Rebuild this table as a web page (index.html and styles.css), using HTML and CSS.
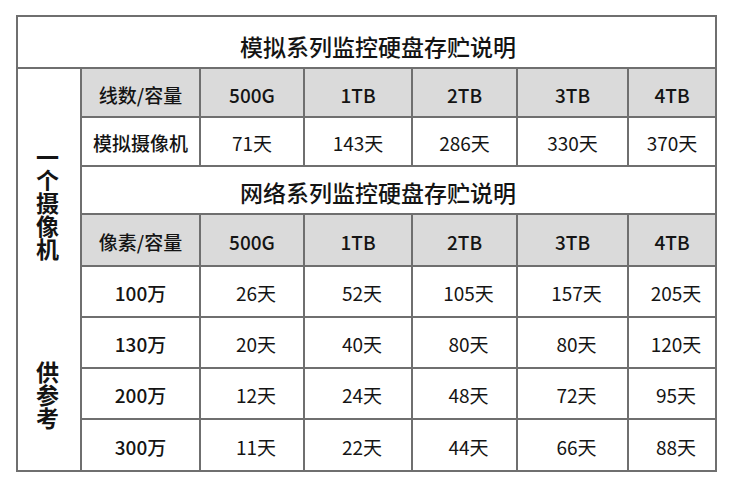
FILE: index.html
```html
<!DOCTYPE html>
<html lang="zh-CN">
<head>
<meta charset="utf-8">
<title>监控硬盘存贮说明</title>
<link rel="stylesheet" href="styles.css">
</head>
<body>
<div class="sheet">
  <div class="title t1">模拟系列监控硬盘存贮说明</div>
  <div class="side"><span class="v">一个摄像机</span><span class="v">供参考</span></div>

  <div class="hd">线数/容量</div>
  <div class="hd">500G</div>
  <div class="hd">1TB</div>
  <div class="hd">2TB</div>
  <div class="hd">3TB</div>
  <div class="hd">4TB</div>

  <div class="lb">模拟摄像机</div>
  <div class="d">71天</div>
  <div class="d">143天</div>
  <div class="d">286天</div>
  <div class="d">330天</div>
  <div class="d">370天</div>

  <div class="title t2">网络系列监控硬盘存贮说明</div>

  <div class="hd">像素/容量</div>
  <div class="hd">500G</div>
  <div class="hd">1TB</div>
  <div class="hd">2TB</div>
  <div class="hd">3TB</div>
  <div class="hd">4TB</div>

  <div class="lb">100万</div>
  <div class="d d2">26天</div>
  <div class="d d2">52天</div>
  <div class="d d2">105天</div>
  <div class="d d2">157天</div>
  <div class="d d2">205天</div>

  <div class="lb">130万</div>
  <div class="d d2">20天</div>
  <div class="d d2">40天</div>
  <div class="d d2">80天</div>
  <div class="d d2">80天</div>
  <div class="d d2">120天</div>

  <div class="lb">200万</div>
  <div class="d d2">12天</div>
  <div class="d d2">24天</div>
  <div class="d d2">48天</div>
  <div class="d d2">72天</div>
  <div class="d d2">95天</div>

  <div class="lb">300万</div>
  <div class="d d2">11天</div>
  <div class="d d2">22天</div>
  <div class="d d2">44天</div>
  <div class="d d2">66天</div>
  <div class="d d2">88天</div>
</div>
</body>
</html>
```

FILE: styles.css
```css
html, body {
  margin: 0;
  background: #ffffff;
}
body {
  padding: 15px 0 0 16px;
  font-family: "Noto Sans CJK SC", "Noto Sans", sans-serif;
  color: #141414;
}
.sheet {
  display: grid;
  width: 701px;
  box-sizing: border-box;
  grid-template-columns: 62px 117px 102px 106px 103px 109px 86px;
  grid-template-rows: 50px 47px 47px 46px 50px 49px 49px 49px 50px;
  gap: 2px;
  padding: 2px;
  background: #6f6f6f;
}
.sheet > div {
  background: #ffffff;
  display: flex;
  align-items: center;
  justify-content: center;
  font-size: 19px;
  line-height: 1;
}
.sheet > .title {
  font-size: 23px;
  font-weight: 500;
}
.sheet > .t1 {
  grid-column: 1 / -1;
  grid-row: 1;
  padding: 8px 0 0 23px;
}
.sheet > .t2 {
  grid-column: 2 / -1;
  padding: 4px 41px 0 0;
}
.sheet > .side {
  grid-column: 1;
  grid-row: 2 / 10;
  flex-direction: column;
  justify-content: flex-start;
  align-items: center;
  padding-top: 77px;
  gap: 100px;
}
.v {
  writing-mode: vertical-rl;
  font-size: 23px;
  line-height: 23px;
  font-weight: 700;
  margin-right: 4px;
}
.sheet > .hd {
  background: #dadada;
  font-weight: 500;
  padding-top: 3px;
}
.sheet > .lb {
  font-weight: 500;
  padding-top: 2px;
}
.sheet > .d {
  font-weight: 400;
  padding-top: 2px;
}
.sheet > .d2 {
  padding-left: 8px;
}
```
